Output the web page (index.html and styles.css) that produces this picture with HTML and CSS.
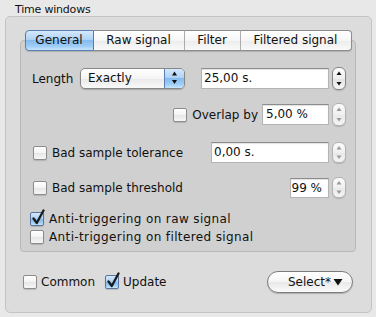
FILE: index.html
```html
<!DOCTYPE html>
<html lang="en">
<head>
    <meta charset="UTF-8">
    <title>Time windows</title>
    <link rel="stylesheet" href="styles.css">
</head>
<body>

    <div class="group-title">Time windows</div>

    <div class="group">
        <div class="tabview">
            <div class="tabs">
                <div class="tab tab-general selected">General</div>
                <div class="tab tab-raw">Raw signal</div>
                <div class="tab tab-filter">Filter</div>
                <div class="tab tab-filtered">Filtered signal</div>
            </div>

            <div class="pane">
                <div class="row row-length">
                    <span class="label-length">Length</span>
                    <div class="popup">
                        <span class="popup-label">Exactly</span>
                        <span class="popup-arrows">
                            <svg width="19" height="19" viewBox="0 0 19 19">
                                <polygon points="7,6.5 12,6.5 9.5,2.5" fill="#111"/>
                                <polygon points="7,11 12,11 9.5,15" fill="#111"/>
                            </svg>
                        </span>
                    </div>
                    <div class="right">
                        <div class="field field-length">25,00 s.</div>
                        <div class="stepper">
                            <svg width="12" height="21" viewBox="0 0 12 21">
                                <polygon points="3.5,7 8.5,7 6,3.5" fill="#111"/>
                                <polygon points="3.5,14 8.5,14 6,17.5" fill="#111"/>
                            </svg>
                        </div>
                    </div>
                </div>

                <div class="row row-overlap">
                    <span class="check"></span>
                    <span class="text">Overlap by</span>
                    <div class="right">
                        <div class="field field-overlap">5,00 %</div>
                        <div class="stepper disabled">
                            <svg width="12" height="21" viewBox="0 0 12 21">
                                <polygon points="3.5,7 8.5,7 6,3.5" fill="#9a9a9a"/>
                                <polygon points="3.5,14 8.5,14 6,17.5" fill="#9a9a9a"/>
                            </svg>
                        </div>
                    </div>
                </div>

                <div class="row row-tolerance">
                    <span class="check"></span>
                    <span class="text">Bad sample tolerance</span>
                    <div class="right">
                        <div class="field field-tolerance">0,00 s.</div>
                        <div class="stepper disabled">
                            <svg width="12" height="19" viewBox="0 0 12 19">
                                <polygon points="3.5,6.5 8.5,6.5 6,3" fill="#9a9a9a"/>
                                <polygon points="3.5,12.5 8.5,12.5 6,16" fill="#9a9a9a"/>
                            </svg>
                        </div>
                    </div>
                </div>

                <div class="row row-threshold">
                    <span class="check"></span>
                    <span class="text">Bad sample threshold</span>
                    <div class="right">
                        <div class="field field-threshold">99 %</div>
                        <div class="stepper disabled">
                            <svg width="12" height="19" viewBox="0 0 12 19">
                                <polygon points="3.5,6.5 8.5,6.5 6,3" fill="#9a9a9a"/>
                                <polygon points="3.5,12.5 8.5,12.5 6,16" fill="#9a9a9a"/>
                            </svg>
                        </div>
                    </div>
                </div>

                <div class="row row-anti row-anti-first">
                    <span class="check checked">
                        <svg width="15" height="17" viewBox="0 0 15 17">
                            <path d="M2.5 9.5 L5.8 14 L12.5 1.5" fill="none" stroke="#1b1b1b" stroke-width="2.3" stroke-linecap="round" stroke-linejoin="round"/>
                        </svg>
                    </span>
                    <span class="text">Anti-triggering on raw signal</span>
                </div>

                <div class="row row-anti">
                    <span class="check"></span>
                    <span class="text">Anti-triggering on filtered signal</span>
                </div>
            </div>
        </div>

        <div class="bottom-row">
            <span class="check"></span>
            <span class="text">Common</span>
            <span class="check checked check-update">
                <svg width="15" height="17" viewBox="0 0 15 17">
                    <path d="M2.5 9.5 L5.8 14 L12.5 1.5" fill="none" stroke="#1b1b1b" stroke-width="2.3" stroke-linecap="round" stroke-linejoin="round"/>
                </svg>
            </span>
            <span class="text">Update</span>
            <div class="select-btn">
                <span>Select*</span>
                <svg width="10" height="8" viewBox="0 0 10 8">
                    <polygon points="0.5,1 9.5,1 5,7.5" fill="#111"/>
                </svg>
            </div>
        </div>
    </div>

</body>
</html>
```

FILE: styles.css
```css
body {
    margin: 0;
    background: #e8e8e8;
    font-family: "DejaVu Sans", sans-serif;
    font-size: 12px;
    color: #111;
}

.group-title {
    padding-left: 15px;
    height: 16px;
    line-height: 20px;
    font-size: 11px;
    letter-spacing: -0.2px;
}

.group {
    margin: 0 4px 0 5px;
    padding: 13px 0 19px 0;
    background: #dcdcdc;
    border: 1px solid #c4c4c4;
    border-radius: 5px;
}

.tabview {
    margin: 0 15px 0 14px;
}

.tabs {
    display: flex;
    justify-content: center;
    height: 21px;
    margin-bottom: -11px;
    position: relative;
    z-index: 1;
}

.tab {
    box-sizing: border-box;
    height: 21px;
    line-height: 19px;
    text-align: center;
    white-space: nowrap;
    border-top: 1px solid #8c8c8c;
    border-bottom: 1px solid #8c8c8c;
    border-right: 1px solid #b0b0b0;
    background: linear-gradient(#ffffff, #f6f6f6 50%, #ececec 51%, #fafafa);
    box-shadow: 0 1px 1px rgba(0, 0, 0, 0.15);
}

.tab:first-child {
    border-left: 1px solid #8c8c8c;
    border-radius: 4px 0 0 4px;
}

.tab:last-child {
    border-right: 1px solid #8c8c8c;
    border-radius: 0 4px 4px 0;
}

.tab-general { width: 69px; }
.tab-raw { width: 91px; }
.tab-filter { width: 56px; }
.tab-filtered { width: 111px; }

.tab.selected {
    border-color: #5a7db2;
    background: linear-gradient(#d4e8fb, #aed3f6 45%, #86bbf0 50%, #9dcdf6 80%, #c9e5fc);
}

.pane {
    padding: 0 9px 5px 0;
    background: #d0d0d0;
    border: 1px solid #b8b8b8;
    border-radius: 4px;
}

.row {
    display: flex;
    align-items: center;
    height: 23px;
    white-space: nowrap;
}

.right {
    margin-left: auto;
    display: flex;
    align-items: center;
}

.row-length {
    margin-top: 26px;
    padding-left: 11px;
}

.label-length {
    width: 48px;
}

.row-overlap {
    margin-top: 13px;
    justify-content: flex-end;
}

.row-overlap .right {
    margin-left: 4px;
}

.row-tolerance {
    margin-top: 15px;
    padding-left: 12px;
}

.row-threshold {
    margin-top: 12px;
    padding-left: 12px;
}

.row-anti {
    height: 18px;
    padding-left: 9px;
    letter-spacing: 0.37px;
}

.row-anti-first {
    margin-top: 11px;
}

.popup {
    display: flex;
    width: 105px;
    height: 21px;
    box-sizing: border-box;
    border: 1px solid #878787;
    border-radius: 5px;
    overflow: hidden;
    background: linear-gradient(#ffffff, #f5f5f5 50%, #e9e9e9 51%, #f9f9f9);
    box-shadow: 0 1px 1px rgba(0, 0, 0, 0.2);
}

.popup-label {
    flex: 1;
    padding-left: 7px;
    line-height: 19px;
}

.popup-arrows {
    width: 19px;
    border-left: 1px solid #5a7db2;
    background: linear-gradient(#d4e8fb, #aed3f6 45%, #86bbf0 50%, #9dcdf6 80%, #c9e5fc);
}

.popup-arrows svg {
    display: block;
}

.field {
    box-sizing: border-box;
    height: 21px;
    line-height: 19px;
    padding-left: 2px;
    white-space: nowrap;
    background: #fff;
    border: 1px solid #b4b4b4;
    border-top-color: #8c8c8c;
    box-shadow: inset 0 1px 1px rgba(0, 0, 0, 0.12);
}

.field-length { width: 128px; }
.field-overlap { width: 67px; padding-left: 3px; }
.field-tolerance { width: 118px; }

.field-threshold {
    width: 39px;
    height: 20px;
    text-align: right;
    padding-left: 0;
    padding-right: 6px;
}

.stepper {
    margin-left: 3px;
    width: 14px;
    height: 23px;
    box-sizing: border-box;
    border: 1px solid #858585;
    border-radius: 6px;
    background: linear-gradient(#fdfdfd, #eeeeee 50%, #e2e2e2 51%, #f6f6f6);
    box-shadow: 0 1px 1px rgba(0, 0, 0, 0.15);
}

.stepper svg {
    display: block;
}

.stepper.disabled {
    border-color: #b3b3b3;
    background: linear-gradient(#fbfbfb, #f0f0f0 50%, #e8e8e8 51%, #f5f5f5);
}

.row-tolerance .stepper,
.row-threshold .stepper {
    height: 21px;
}

.check {
    position: relative;
    flex: none;
    width: 14px;
    height: 14px;
    box-sizing: border-box;
    margin-right: 5px;
    border: 1px solid #8c8c8c;
    border-radius: 2px;
    background: linear-gradient(#ffffff, #f3f3f3 50%, #e6e6e6 51%, #f7f7f7);
    box-shadow: 0 1px 1px rgba(0, 0, 0, 0.15);
}

.check.checked {
    border-color: #55779f;
    background: linear-gradient(#d4e8fb, #aed3f6 45%, #86bbf0 50%, #9dcdf6 80%, #c9e5fc);
}

.check svg {
    position: absolute;
    left: 0;
    top: -4px;
}

.bottom-row {
    display: flex;
    align-items: center;
    height: 22px;
    margin-top: 19px;
    padding: 0 18px 0 17px;
    white-space: nowrap;
}

.bottom-row .check {
    margin-right: 4px;
}

.check-update {
    margin-left: 10px;
}

.select-btn {
    margin-left: auto;
    display: flex;
    align-items: center;
    justify-content: flex-end;
    gap: 2px;
    width: 86px;
    height: 22px;
    box-sizing: border-box;
    padding-right: 9px;
    border: 1px solid #7c7c7c;
    border-radius: 11px;
    background: linear-gradient(#ffffff, #f5f5f5 50%, #e8e8e8 51%, #fbfbfb);
    box-shadow: 0 1px 1px rgba(0, 0, 0, 0.2);
}
```
